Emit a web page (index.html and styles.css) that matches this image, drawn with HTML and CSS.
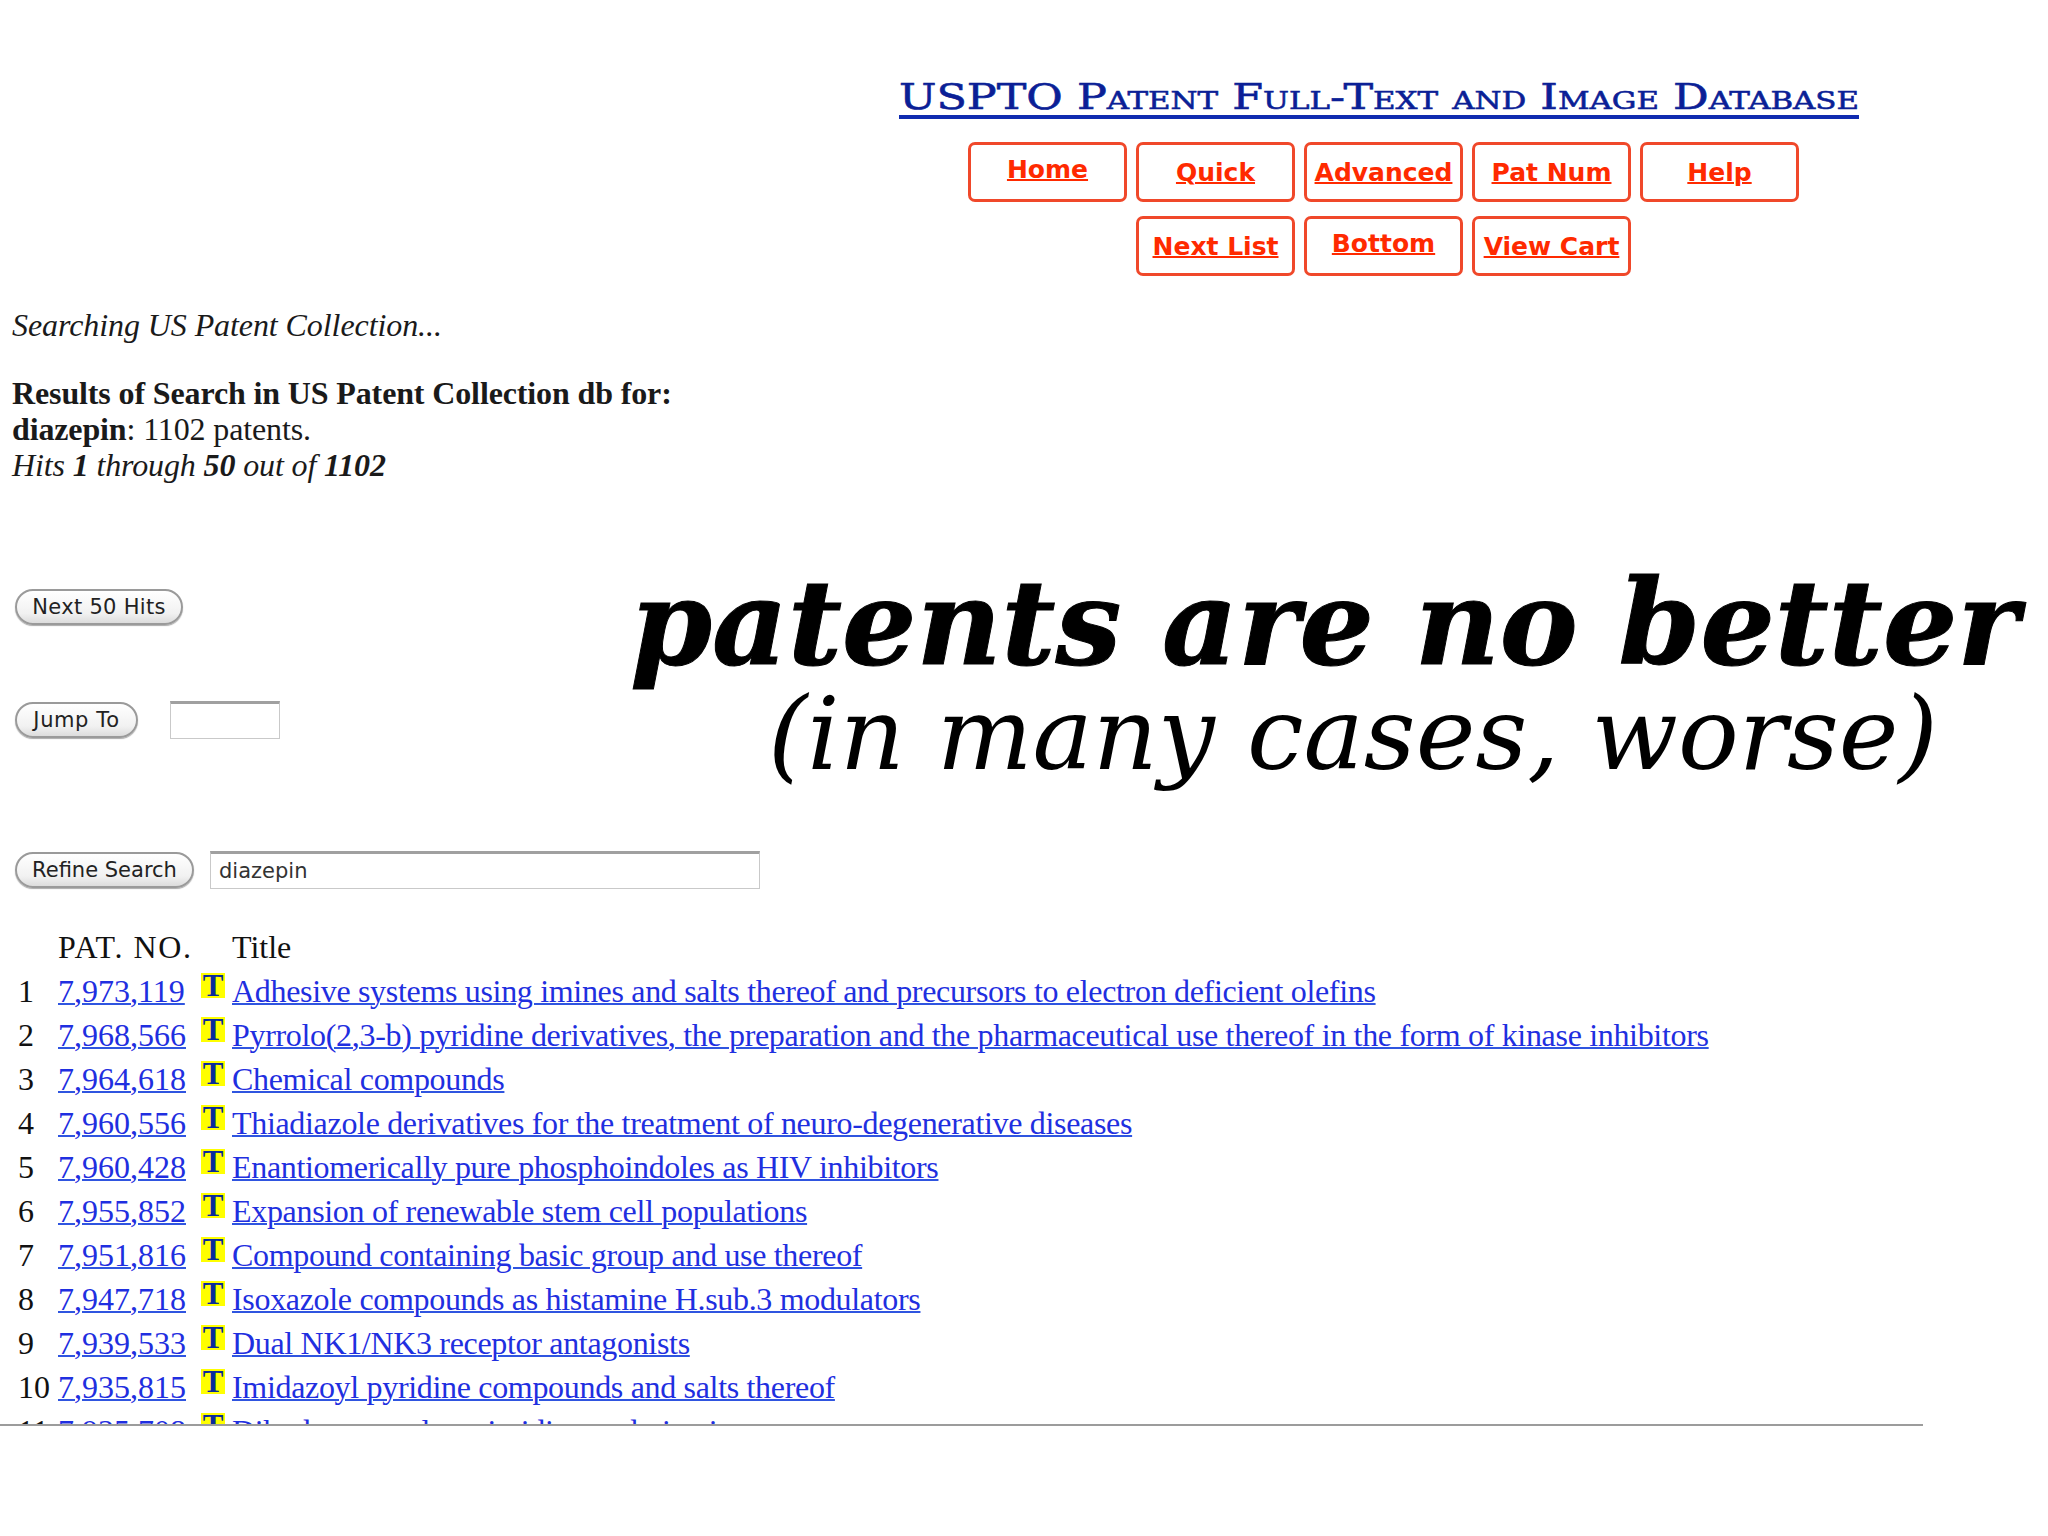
FILE: index.html
```html
<!DOCTYPE html>
<html lang="en">
<head>
<meta charset="utf-8">
<title>USPTO Patent Full-Text and Image Database</title>
<link rel="stylesheet" href="styles.css">
</head>
<body>
<main class="slide">
  <div class="screen">
    <header class="masthead">
      <h1 class="db-title"><span class="db-title-text">USPTO Patent Full-Text and Image Database</span></h1>
      <nav class="nav-row">
        <a class="nav-btn nav-high" href="#">Home</a>
        <a class="nav-btn" href="#">Quick</a>
        <a class="nav-btn" href="#">Advanced</a>
        <a class="nav-btn" href="#">Pat Num</a>
        <a class="nav-btn" href="#">Help</a>
      </nav>
      <nav class="nav-row">
        <a class="nav-btn" href="#">Next List</a>
        <a class="nav-btn nav-high" href="#">Bottom</a>
        <a class="nav-btn" href="#">View Cart</a>
      </nav>
    </header>

    <p class="searching">Searching US Patent Collection...</p>
    <p class="summary">
      <strong>Results of Search in US Patent Collection db for:</strong><br>
      <strong>diazepin</strong>: 1102 patents.<br>
      <em>Hits <strong>1</strong> through <strong>50</strong> out of <strong>1102</strong></em>
    </p>

    <div class="form-row form-next"><button class="pill pill-next" type="button">Next 50 Hits</button></div>
    <div class="form-row form-jump"><button class="pill pill-jump" type="button">Jump To</button><input class="field field-jump" type="text"></div>
    <div class="form-row form-refine"><button class="pill pill-refine" type="button">Refine Search</button><input class="field field-refine" type="text" value="diazepin"></div>

    <div class="results">
      <div class="row head"><span></span><span class="pat-head">PAT. NO.</span><span></span><span>Title</span></div>
      <div class="row"><span>1</span><a href="#">7,973,119</a><b class="t-icon">T</b><a class="title-link" href="#">Adhesive systems using imines and salts thereof and precursors to electron deficient olefins</a></div>
      <div class="row"><span>2</span><a href="#">7,968,566</a><b class="t-icon">T</b><a class="title-link" href="#">Pyrrolo(2,3-b) pyridine derivatives, the preparation and the pharmaceutical use thereof in the form of kinase inhibitors</a></div>
      <div class="row"><span>3</span><a href="#">7,964,618</a><b class="t-icon">T</b><a class="title-link" href="#">Chemical compounds</a></div>
      <div class="row"><span>4</span><a href="#">7,960,556</a><b class="t-icon">T</b><a class="title-link" href="#">Thiadiazole derivatives for the treatment of neuro-degenerative diseases</a></div>
      <div class="row"><span>5</span><a href="#">7,960,428</a><b class="t-icon">T</b><a class="title-link" href="#">Enantiomerically pure phosphoindoles as HIV inhibitors</a></div>
      <div class="row"><span>6</span><a href="#">7,955,852</a><b class="t-icon">T</b><a class="title-link" href="#">Expansion of renewable stem cell populations</a></div>
      <div class="row"><span>7</span><a href="#">7,951,816</a><b class="t-icon">T</b><a class="title-link" href="#">Compound containing basic group and use thereof</a></div>
      <div class="row"><span>8</span><a href="#">7,947,718</a><b class="t-icon">T</b><a class="title-link" href="#">Isoxazole compounds as histamine H.sub.3 modulators</a></div>
      <div class="row"><span>9</span><a href="#">7,939,533</a><b class="t-icon">T</b><a class="title-link" href="#">Dual NK1/NK3 receptor antagonists</a></div>
      <div class="row"><span>10</span><a href="#">7,935,815</a><b class="t-icon">T</b><a class="title-link" href="#">Imidazoyl pyridine compounds and salts thereof</a></div>
      <div class="row"><span>11</span><a href="#">7,935,708</a><b class="t-icon">T</b><a class="title-link" href="#">Dihydropyrazolopyrimidinone derivatives</a></div>
    </div>
  </div>

  <div class="overlay">
    <p class="claim">patents are no better</p>
    <p class="aside">(in many cases, worse)</p>
  </div>
</main>
</body>
</html>
```
FILE: styles.css
```css
html, body { margin: 0; padding: 0; background: #fff; }
.slide { position: relative; width: 2048px; height: 1536px; overflow: hidden; background: #fff; }
.screen {
  width: 1923px; height: 1424px; overflow: hidden; box-sizing: content-box;
  border-bottom: 2px solid #9c9c9c;
  font-family: "Liberation Serif", serif; font-size: 32px; color: #111;
}
.masthead { margin-left: 899px; width: 960px; padding-top: 74px; }
.db-title {
  margin: 0; font-family: "DejaVu Serif", serif; font-variant: small-caps; font-weight: 400;
  font-size: 36px; line-height: 46px; height: 41px; color: #0b1f96; text-align: center; white-space: nowrap;
  border-bottom: 4px solid #0f2bb0;
}
.db-title-text { display: inline-block; transform: scaleX(1.234); -webkit-text-stroke: 0.6px #0b1f96; }
.nav-row { display: flex; justify-content: center; gap: 9px; margin-top: 14px; padding-left: 9px; }
.masthead .db-title + .nav-row { margin-top: 23px; }
.nav-btn {
  box-sizing: border-box; width: 159px; height: 60px; border: 3px solid #f0482a; border-radius: 7px;
  display: flex; align-items: center; justify-content: center;
  font-family: "DejaVu Sans", sans-serif; font-weight: 700; font-size: 25px; color: #ff2a00; white-space: nowrap;
  text-decoration-thickness: 2px;
}
.nav-high { padding-bottom: 5px; }
.searching { margin: 31px 0 0 12px; font-style: italic; line-height: 36px; font-size: 32px; color: #1a1a1a; letter-spacing: -0.08px; }
.summary { margin: 32px 0 0 12px; line-height: 36px; font-size: 32px; color: #1a1a1a; letter-spacing: -0.13px; }
.form-row { display: flex; align-items: center; margin-left: 15px; }
.form-next { margin-top: 106px; }
.form-jump { margin-top: 76px; gap: 32px; }
.form-refine { margin-top: 112px; gap: 16px; }
.pill {
  box-sizing: border-box; height: 36px; padding: 0; border: 2px solid #9a9a9a; border-radius: 18px;
  background: linear-gradient(#fff, #f1f1f1 70%, #dcdcdc); box-shadow: 0 1px 1px #aaa;
  font-family: "DejaVu Sans", sans-serif; font-size: 21px; color: #222;
}
.pill-next { width: 168px; letter-spacing: 0.3px; }
.pill-jump { width: 123px; letter-spacing: 0.6px; }
.pill-refine { width: 179px; }
.field {
  box-sizing: border-box; height: 38px; border: 1px solid #c9c9c9; border-top: 3px solid #a0a0a0; background: #fff;
  font-family: "DejaVu Sans", sans-serif; font-size: 21px; color: #333; padding: 0 8px; outline: none;
}
.field-jump { width: 110px; }
.field-refine { width: 550px; }
.results { margin: 36px 0 0 18px; }
.row { display: grid; grid-template-columns: 40px 143px 31px auto; justify-content: start; height: 44px; line-height: 44px; white-space: nowrap; }
.row a { color: #1f2fe0; text-decoration-color: #2f55e0; text-decoration-thickness: 2px; }
.row .title-link { letter-spacing: -0.32px; }
.pat-head { letter-spacing: 1.6px; }
.t-icon {
  width: 24px; height: 25px; margin-top: 4px; background: #ffff00; color: #0a2a9c;
  font-family: "Liberation Serif", serif; font-size: 31px; line-height: 26px; text-align: center;
}
.overlay { position: absolute; left: 620px; top: 566px; width: 1428px; }
.claim, .aside { margin: 0; white-space: nowrap; font-family: "DejaVu Serif", serif; font-style: italic; color: #000; }
.claim { font-size: 117px; font-weight: 700; line-height: 114px; text-align: right; padding-right: 29px; -webkit-text-stroke: 1px #000; }
.aside { font-size: 101px; font-weight: 400; line-height: 108px; text-align: right; padding-right: 110px; }
```
